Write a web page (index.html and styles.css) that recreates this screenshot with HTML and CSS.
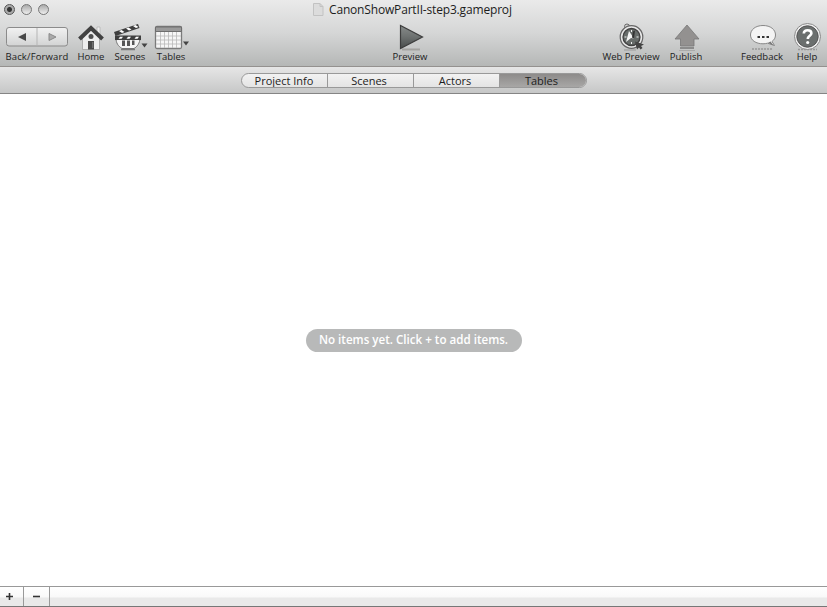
FILE: index.html
```html
<!DOCTYPE html>
<html lang="en">
<head>
<meta charset="utf-8">
<title>CanonShowPartII-step3.gameproj</title>
<link rel="stylesheet" href="styles.css">
</head>
<body>
<div class="window">
  <header class="chrome">
    <div class="titlebar">
      <div class="lights"><i class="light edited"></i><i class="light"></i><i class="light"></i></div>
      <div class="title">
        <svg width="11" height="13" viewBox="0 0 11 13"><path d="M.5.5h6.500l3 3v9h-9.500z" fill="#dcdcdc" stroke="#c2c2c2"/><path d="M7 .5v3h3" fill="none" stroke="#c2c2c2"/></svg>
        <span>CanonShowPartII-step3.gameproj</span>
      </div>
    </div>
    <nav class="toolbar">
      <div class="tool back">
        <div class="art">
          <svg width="62" height="20" viewBox="0 0 62 20"><defs><linearGradient id="btn" x2="0" y2="1"><stop stop-color="#f2f2f2"/><stop offset="1" stop-color="#d2d3d3"/></linearGradient></defs><rect x=".5" y=".5" width="61" height="18.500" rx="2.500" fill="url(#btn)" stroke="#8b8b8b"/><path d="M31 1v17.500" stroke="#b5b5b5"/><path d="M20 6v8l-8-4z" fill="#484848"/><path d="M43 6.500v7l7-3.500z" fill="#aaa" stroke="#8a8a8a"/></svg>
        </div>
        <span>Back/Forward</span>
      </div>
      <div class="tool home">
        <div class="art">
          <svg width="28" height="28" viewBox="0 0 28 28"><path d="M20 5h3v8h-3z" fill="#eee" stroke="#aaa" stroke-width=".6"/><path d="M5.500 15 14 7l8.500 8v12.500h-17z" fill="#ededed" stroke="#999" stroke-width=".7"/><path d="M2.500 17 14 6l11.500 11" fill="none" stroke="#414141" stroke-width="4"/><circle cx="14" cy="14.500" r="2.500" fill="#505050"/><path d="M11 19h6v8.500h-6z" fill="#484848"/><path d="M15 20h1.500v6H15z" fill="#707070"/></svg>
        </div>
        <span>Home</span>
      </div>
      <div class="tool scenes">
        <div class="art">
          <svg width="36" height="29" viewBox="0 0 36 29"><path d="M4 16h24c0 5-3 9-6 10.500H10C6 24 4 21 4 16z" fill="#f4f4f4" stroke="#777"/><path d="M10 18.500h3V24h-3zM15 18.500h3V24h-3zM20 18.500h2.500V23H20z" fill="#555"/><path d="M9 27.500h14" stroke="#777" stroke-width="1.500"/><path d="m2 10 24-8 1.500 4L3.500 14z" fill="#3e3e3e"/><path d="M3 13.500h26v4.500H3z" fill="#3e3e3e"/><path d="m7 9 3 2 2.500-1-3-2zM14 6.500l3 2 2.500-1-3-2zM21 4l3 2 2.500-1-3-2zM8 14.700h3l-1.500 2h-3zM16 14.700h3l-1.500 2h-3zM24 14.700h3l-1.500 2h-3z" fill="#fff"/><path d="M29.500 21.500h6l-3 4z" fill="#444"/></svg>
        </div>
        <span>Scenes</span>
      </div>
      <div class="tool tables">
        <div class="art">
          <svg width="36" height="28" viewBox="0 0 36 28"><rect x="2.500" y="4.500" width="26" height="22" rx="1.500" fill="#f6f6f6" stroke="#7b7b7b" stroke-width="1.300"/><path d="M2.500 5h26v4.500h-26z" fill="#9a9a9a" stroke="#6e6e6e"/><path d="M3 14h25M3 18h25M3 22h25M7.500 10v16M11.500 10v16M15.500 10v16M19.500 10v16M23.500 10v16" stroke="#b9b9b9" stroke-width=".8"/><path d="M30 19.500h6l-3 4z" fill="#444"/></svg>
        </div>
        <span>Tables</span>
      </div>
      <div class="tool preview">
        <div class="art">
          <svg width="28" height="29" viewBox="0 0 28 29"><defs><linearGradient id="play" x2="0" y2="1"><stop stop-color="#888c8b"/><stop offset=".5" stop-color="#6c706f"/><stop offset="1" stop-color="#484b4a"/></linearGradient></defs><path d="M6 27.500h18" stroke="#a4a3a0" stroke-width="2"/><path d="M4.500 3.500v23l22-11.500z" fill="url(#play)" stroke="#3c3c3c" stroke-width="1.200"/></svg>
        </div>
        <span>Preview</span>
      </div>
      <div class="tool web">
        <div class="art">
          <svg width="28" height="29" viewBox="0 0 28 29"><circle cx="10" cy="4.500" r="2.500" fill="#ddd" stroke="#666"/><circle cx="14.500" cy="15" r="11.300" fill="#e8e8e8" stroke="#666" stroke-width="1.200"/><circle cx="14.500" cy="15" r="8.500" fill="#676c6a" stroke="#414141" stroke-width="1.300"/><path d="M14.500 8v2M14.500 20v2M7.500 15h2M19.500 15h2" stroke="#eee"/><path d="m12 9 5 7.500-3-.5-5 4z" fill="#f4f4f4"/><path d="m16 9.500 2-1-1 8-2-1z" fill="#333"/><path d="m18 19.500 9 3-3 1.500 1.500 2-2 1.500-1.500-2-2 2z" fill="#444"/><path d="M7 28h12" stroke="#999"/></svg>
        </div>
        <span>Web Preview</span>
      </div>
      <div class="tool publish">
        <div class="art">
          <svg width="28" height="29" viewBox="0 0 28 29"><path d="m15 3 12 14h-5v7H8.500v-7H3z" fill="#939190" stroke="#777" stroke-width=".8"/><path d="M8 26h14" stroke="#777" stroke-width="1.500"/><path d="M7 28.500h16" stroke="#aaa"/></svg>
        </div>
        <span>Publish</span>
      </div>
      <div class="tool feedback">
        <div class="art">
          <svg width="28" height="29" viewBox="0 0 28 29"><path d="M4 27h21" stroke="#999" stroke-width="1.500" stroke-dasharray="2 1"/><path d="M15 3.500c7.500 0 12.500 4 12.500 9.500 0 3-1.500 5-3.500 6.500l2.500 4-7-2.300c-1.500.4-3 .6-4.500.6-7 0-12.500-3.500-12.500-8.800S7.500 3.500 15 3.500z" fill="#f4f4f4" stroke="#888"/><path d="m20 20.700 2.600-1.300 2.900 4z" fill="#777"/><path d="M9.500 15H12M14 15h2.500M18.500 15H21" stroke="#333" stroke-width="2.200"/></svg>
        </div>
        <span>Feedback</span>
      </div>
      <div class="tool help">
        <div class="art">
          <svg width="28" height="29" viewBox="0 0 28 29"><path d="M5 27.500h19" stroke="#999" stroke-width="1.500" stroke-dasharray="2 1"/><circle cx="14.500" cy="14.500" r="13" fill="#eee" stroke="#8a8a8a"/><circle cx="14.500" cy="14.500" r="10.700" fill="#6b6f6e" stroke="#555"/><path d="M10.800 11.500c0-2.200 1.600-3.300 3.700-3.300s3.900 1.100 3.900 3.100c0 2.500-3.600 2.700-3.600 5.700" fill="none" stroke="#fff" stroke-width="2.600"/><circle cx="14.700" cy="20.500" r="1.600" fill="#fff"/></svg>
        </div>
        <span>Help</span>
      </div>
    </nav>
  </header>
  <div class="tabbar">
    <div class="tabs">
      <div class="tab">Project Info</div><div class="tab">Scenes</div><div class="tab">Actors</div><div class="tab selected">Tables</div>
    </div>
  </div>
  <main class="content"><div class="empty"><span>No items yet. Click + to add items.</span></div></main>
  <footer class="footer">
    <div class="add"><svg width="7" height="7" viewBox="0 0 7 7"><path d="M3.500 0v7M0 3.500h7" stroke="#333" stroke-width="1.600"/></svg></div>
    <div class="remove"><svg width="7" height="7" viewBox="0 0 7 7"><path d="M0 3.500h7" stroke="#333" stroke-width="1.600"/></svg></div>
  </footer>
</div>
</body>
</html>
```
FILE: styles.css
```css
* { box-sizing: border-box; }
body { margin: 0; background: #fff; font-family: "Open Sans", "Noto Sans", sans-serif; color: #1c1c1c; }
svg { display: block; overflow: visible; }
.window { width: 827px; height: 607px; display: flex; flex-direction: column; overflow: hidden; }
.chrome { height: 67px; flex: none; background: linear-gradient(#eaeaea, #d5d6d6 50%, #b5b7b6); border-bottom: 1px solid #94918f; }
.titlebar { height: 19px; display: grid; grid-template-columns: 52px 1fr 52px; align-items: center; }
.lights { display: flex; gap: 6px; padding-left: 4px; margin-top: -1px; }
.light { width: 11px; height: 11px; border: 1.5px solid #777; border-radius: 50%; background: linear-gradient(#aaa, #eee); }
.light.edited { background: radial-gradient(circle, #333 0 2px, #aaa 3px); border-color: #555; }
.title { display: flex; justify-content: center; align-items: center; gap: 5px; padding-right: 3px; font-size: 12px; line-height: 18px; letter-spacing: -0.17px; white-space: nowrap; }
.title span { width: 182px; }
.toolbar { height: 47px; display: grid; grid-template-columns: 74px 34px 44px 38px 195px 50px 165px 62px 48px 29px 46px 2px 40px; padding-top: 3px; }
.tool { display: flex; flex-direction: column; align-items: center; font-size: 9.5px; line-height: 12px; white-space: nowrap; }
.art { height: 29px; flex: none; }
.back { letter-spacing: 0.15px; }
.back .art { padding-top: 5px; }
.scenes .art, .tables .art { width: 36px; }
.preview { grid-column: 6; }
.web { grid-column: 8; }
.feedback { grid-column: 11; }
.help { grid-column: 13; }
.tabbar { height: 27px; flex: none; display: flex; justify-content: center; padding-top: 6px; background: linear-gradient(#e6e6e6, #c6c7c7); border-bottom: 1px solid #858585; }
.tabs { display: grid; grid-template-columns: repeat(4, 86px); width: 346px; height: 15px; border: 1px solid #999; border-radius: 8px; overflow: hidden; background: linear-gradient(#f2f2f2, #e4e4e4); }
.tab { padding-right: 2px; font-size: 11px; line-height: 14px; text-align: center; border-right: 1px solid #999; }
.tab:first-child { padding-right: 0; }
.tab.selected { border-right: 0; background: linear-gradient(#8d8b8a, #aaa9a8); }
.content { flex: 1; display: flex; justify-content: center; align-items: center; }
.empty { width: 216px; height: 23px; border-radius: 12px; background: #b8b9b9; color: #fff; font-size: 11.6px; font-weight: 600; line-height: 22px; text-align: center; white-space: nowrap; }
.footer { height: 21px; flex: none; display: flex; background: linear-gradient(#fff 0, #f9f9f9 50%, #e9e9e9 60%); border-top: 1px solid #999; border-bottom: 1px solid #777; }
.add, .remove { display: flex; align-items: center; justify-content: center; border-right: 1px solid #999; }
.add { width: 24px; padding-right: 4px; }
.remove { width: 26px; }
```
